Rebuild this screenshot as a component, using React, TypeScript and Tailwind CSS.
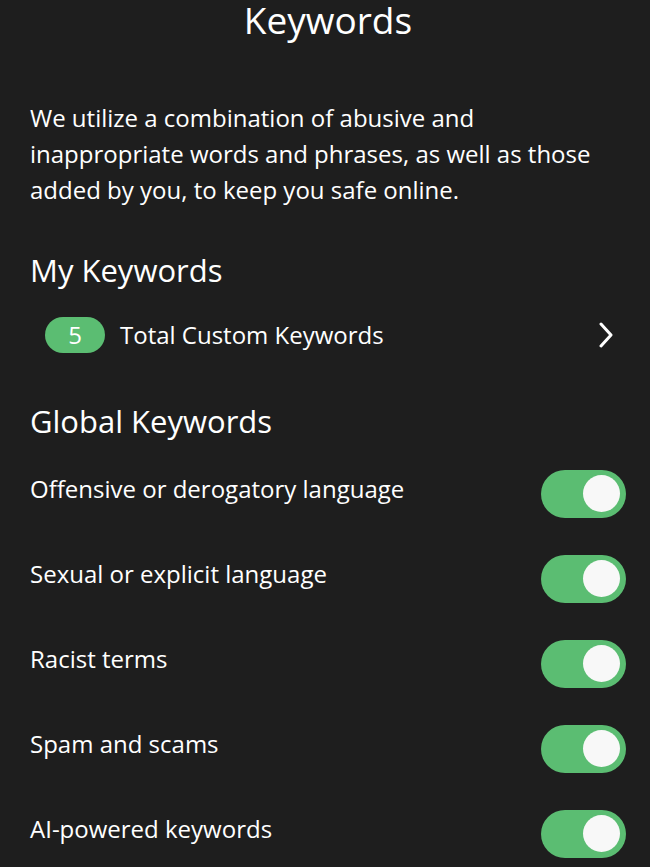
import React from "react";

const rows = [
  "Offensive or derogatory language",
  "Sexual or explicit language",
  "Racist terms",
  "Spam and scams",
  "AI-powered keywords",
];

function Toggle() {
  return (
    <div className="flex h-[48px] w-[85px] shrink-0 items-center justify-end rounded-full bg-[#5bbd72] pr-[6px]">
      <div className="h-[37px] w-[37px] rounded-full bg-[#f8f8f8]" />
    </div>
  );
}

export default function App() {
  return (
    <div
      className="min-h-[867px] w-full bg-[#1e1e1e] text-white"
      style={{ fontFamily: '"Open Sans", "Noto Sans", sans-serif' }}
    >
      <div className="pl-[30px] pr-[24px]">
        <h1 className="text-center text-[37px] leading-[40px]">Keywords</h1>
        <p className="mt-[60px] pr-[6px] text-[24px] leading-[36px]">
          We utilize a combination of abusive and inappropriate words and phrases, as well as those added by you, to keep you safe online.
        </p>
        <h2 className="mt-[42px] text-[31px] leading-[40px]">My Keywords</h2>
        <div className="mt-[27px] flex items-center pl-[15px]">
          <div className="flex h-[36px] w-[60px] items-center justify-center rounded-full bg-[#5bbd72] text-[24px]">
            5
          </div>
          <span className="ml-[15px] flex-1 text-[24px] leading-[36px]">Total Custom Keywords</span>
          <svg width="16" height="26" viewBox="0 0 16 26" className="mr-[12px]">
            <path d="M3 2 L13 13 L3 24" fill="none" stroke="white" strokeWidth="3" strokeLinecap="round" strokeLinejoin="round" />
          </svg>
        </div>
        <h2 className="mt-[48px] text-[31px] leading-[40px]">Global Keywords</h2>
        <div className="mt-[10px] flex flex-col">
          {rows.map((r) => (
            <div key={r} className="flex h-[85px] items-center justify-between">
              <span className="mb-[10px] text-[24px] leading-[36px]">{r}</span>
              <Toggle />
            </div>
          ))}
        </div>
      </div>
    </div>
  );
}
